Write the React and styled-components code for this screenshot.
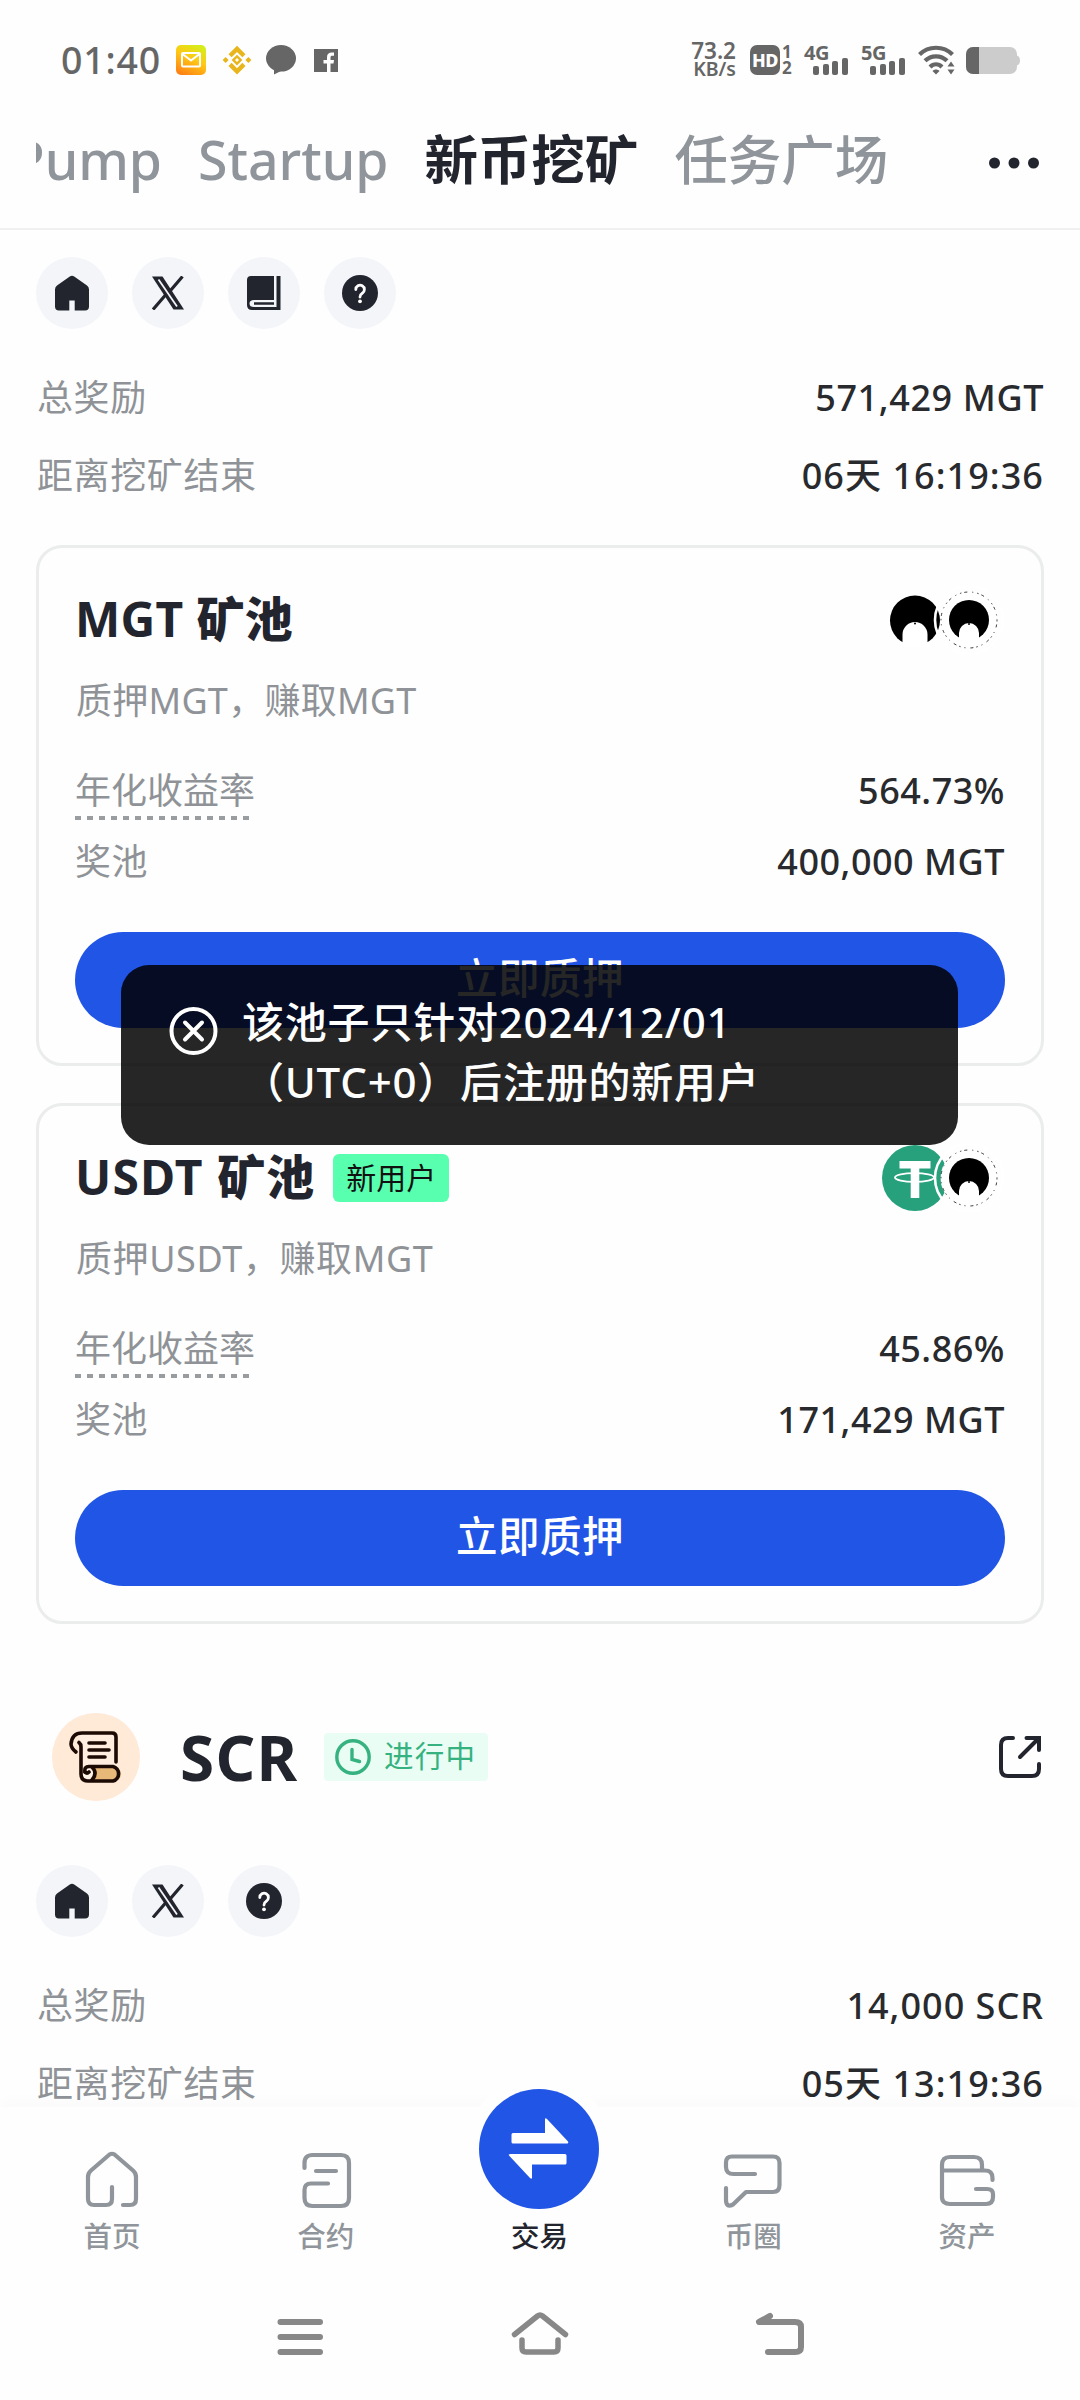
import React from 'react';
import styled, { createGlobalStyle } from 'styled-components';

const fontStack = `'Noto Sans', 'Noto Sans CJK SC', sans-serif`;

const GlobalStyle = createGlobalStyle`
  * { box-sizing: border-box; }
  body { margin: 0; background: #fefefe; }
`;

const Screen = styled.div`
  position: relative;
  display: flex;
  flex-direction: column;
  width: 1080px;
  height: 2400px;
  overflow: hidden;
  background: #fefefe;
  color: #23252e;
  font-family: ${fontStack};
  svg { display: block; flex: none; }
`;

/* ---------- status bar ---------- */
const StatusBar = styled.div`
  display: flex;
  align-items: center;
  justify-content: space-between;
  height: 120px;
  padding: 0 60px 0 61px;
  color: #666;
`;
const StatusGroup = styled.div`
  display: flex;
  align-items: center;
`;
const Clock = styled.span`
  width: 115px;
  margin-top: -1px;
  font-size: 37.5px;
  line-height: 40px;
  font-weight: 500;
  letter-spacing: 0.8px;
`;
const Speed = styled.div`
  display: flex;
  flex-direction: column;
  align-items: flex-end;
  width: 60px;
  margin-right: 14px;
  font-size: 22.5px;
  line-height: 18px;
  font-weight: 600;
  white-space: nowrap;
  span + span { font-size: 19.5px; }
`;
const HdBadge = styled.div`
  display: flex;
  align-items: center;
  justify-content: center;
  width: 30px;
  height: 30px;
  border-radius: 7px;
  background: #666;
  color: #fff;
  font-size: 18px;
  font-weight: 800;
  letter-spacing: -0.5px;
`;
const SimNumbers = styled.div`
  display: flex;
  flex-direction: column;
  width: 12px;
  margin: 0 10px 0 2px;
  font-size: 17px;
  line-height: 16px;
  font-weight: 700;
`;
const Signal = styled.div`
  display: flex;
  flex-direction: column;
  width: 45px;
  height: 30px;
  margin-right: 12px;
  font-size: 20px;
  line-height: 15px;
  font-weight: 700;
  letter-spacing: -0.5px;
`;
const Bars = styled.div`
  display: flex;
  align-items: flex-end;
  gap: 3.6px;
  height: 17px;
  margin: -2px 0 0 9px;
`;
const Bar = styled.i`
  width: 6px;
  height: ${(p) => p.$h}px;
  border-radius: 2px;
  background: #666;
`;

/* ---------- tabs ---------- */
const TabBar = styled.header`
  display: flex;
  align-items: center;
  justify-content: space-between;
  height: 110px;
  padding: 0 39px 22px 36px;
  border-bottom: 2px solid #f0f0f0;
`;
const Tabs = styled.nav`
  display: flex;
  gap: 36px;
  width: 860px;
  margin-top: -6px;
  overflow: hidden;
`;
const Tab = styled.span`
  flex: none;
  font-size: 53.5px;
  line-height: 80px;
  font-weight: ${(p) => (p.$active ? 700 : 500)};
  color: ${(p) => (p.$active ? '#23252e' : '#8f959a')};
  &:first-child { margin-left: -24px; }
`;

/* ---------- project content ---------- */
const Main = styled.main`
  display: flex;
  flex-direction: column;
  height: 1877px;
  padding: 27px 36px 0;
  overflow: hidden;
  > * { flex-shrink: 0; }
`;
const LinkRow = styled.div`
  display: flex;
  gap: 24px;
  margin-bottom: 29px;
`;
const LinkButton = styled.button`
  display: flex;
  align-items: center;
  justify-content: center;
  width: 72px;
  height: 72px;
  padding: 0;
  border: 0;
  border-radius: 50%;
  background: #f3f5f9;
`;
const StatRow = styled.div`
  display: flex;
  align-items: center;
  justify-content: space-between;
  height: 78px;
  padding: 1px 0 0 1px;
`;
const Label = styled.span`
  font-size: 36px;
  line-height: 50px;
  letter-spacing: ${(p) => p.$spacing ?? 0.6}px;
  color: #8f9397;
`;
const Value = styled.span`
  font-size: 36px;
  line-height: 50px;
  font-weight: 500;
  letter-spacing: ${(p) => p.$spacing ?? 0.5}px;
  color: #282a2d;
`;
const Cards = styled.div`
  display: flex;
  flex-direction: column;
  gap: 37px;
  margin: 31px 0 88px;
`;
const Card = styled.section`
  display: flex;
  flex-direction: column;
  height: 521px;
  padding: 38px 36px 35px;
  border: 3px solid #ebecec;
  border-radius: 26px;
`;
const CardHead = styled.div`
  display: flex;
  align-items: center;
  justify-content: space-between;
  height: 66px;
  svg { margin-top: 1px; }
`;
const TitleGroup = styled.div`
  display: flex;
  align-items: center;
`;
const CardTitle = styled.h2`
  margin: 0;
  font-size: 48px;
  line-height: 66px;
  font-weight: 700;
  letter-spacing: ${(p) => p.$spacing || 0}px;
`;
const Heavy = styled.span`
  font-weight: 900;
`;
const NewUserTag = styled.span`
  height: 48px;
  width: 116px;
  margin: 2px 0 0 18px;
  border-radius: 6px;
  background: #57ffaf;
  color: #111;
  font-size: 30px;
  line-height: 48px;
  text-align: center;
`;
const Subtitle = styled(Label)`
  margin: 24px 0 40px 1px;
`;
const PoolRow = styled.div`
  display: flex;
  justify-content: space-between;
  height: 50px;
  margin-bottom: ${(p) => p.$gap}px;
`;
const HintLabel = styled(Label)`
  display: flex;
  flex-direction: column;
  letter-spacing: 0;
  &::after {
    content: '';
    height: 4px;
    width: 174px;
    flex: none;
    background: repeating-linear-gradient(90deg, #9a9da0 0 6px, transparent 6px 12px);
  }
`;
const StakeButton = styled.button`
  height: 96px;
  padding: 0 0 4px;
  border: 0;
  border-radius: 48px;
  background: #2155e6;
  color: #fff;
  font: 500 41.5px/92px ${fontStack};
  letter-spacing: 0.5px;
`;

const ProjectHead = styled.div`
  display: flex;
  align-items: center;
  height: 90px;
  margin-bottom: 63px;
  padding: 0 3px 0 16px;
`;
const ProjectName = styled.h1`
  width: 144px;
  margin: 0 0 0 40px;
  font-size: 62px;
  line-height: 84px;
  font-weight: 700;
  letter-spacing: 1.3px;
`;
const Ongoing = styled.div`
  display: flex;
  align-items: center;
  gap: 13px;
  height: 48px;
  width: 164px;
  margin-right: auto;
  padding-left: 11px;
  border-radius: 4px;
  background: #eafdf4;
  color: #35b280;
  font-size: 29.5px;
  line-height: 44px;
  letter-spacing: 1.2px;
`;
const OngoingText = styled.span`
  margin-top: -2px;
`;

/* ---------- bottom navigation ---------- */
const BottomNav = styled.nav`
  position: relative;
  display: grid;
  grid-template-columns: repeat(5, 1fr);
  height: 163px;
  padding: 0 6px 0 5px;
  background: #fefefe;
  box-shadow: 0 -6px 14px rgba(0, 0, 0, 0.018);
`;
const NavItem = styled.div`
  display: flex;
  flex-direction: column;
  align-items: center;
  padding-top: 39px;
  font-size: 28.5px;
  line-height: 40px;
  font-weight: 500;
  color: ${(p) => (p.$active ? '#23252e' : '#8f959a')};
  svg, i { margin-bottom: 6px; }
`;
const IconSpace = styled.i`
  height: 64px;
`;
const TradeHalo = styled.div`
  position: absolute;
  left: 466px;
  top: -31px;
  width: 146px;
  height: 146px;
  padding: 13px;
  border-radius: 50%;
  background: #fefefe;
`;
const TradeDisc = styled.div`
  display: flex;
  align-items: center;
  justify-content: center;
  width: 120px;
  height: 120px;
  border-radius: 50%;
  background: #2155e6;
`;
const SystemNav = styled.div`
  display: flex;
  align-items: center;
  justify-content: center;
  gap: 180px;
  height: 130px;
`;

/* ---------- toast ---------- */
const Toast = styled.div`
  position: absolute;
  left: 121px;
  top: 965px;
  display: flex;
  width: 837px;
  height: 180px;
  padding: 27px 48px;
  gap: 23px;
  border-radius: 28px;
  background: rgba(0, 0, 0, 0.85);
  color: #fff;
  svg { margin-top: 14px; }
`;
const ToastText = styled.p`
  margin: 0;
  font-size: 42px;
  line-height: 60px;
  font-weight: 500;
  letter-spacing: 0.8px;
`;

/* ---------- icons ---------- */
const MailIcon = () => (
  <svg width="30" height="30" viewBox="0 0 30 30">
    <defs>
      <linearGradient id="mail" x1="0.75" y1="0" x2="0.25" y2="1">
        <stop offset="0" stopColor="#d4ee1a" />
        <stop offset="0.45" stopColor="#ffc814" />
        <stop offset="1" stopColor="#ff8214" />
      </linearGradient>
    </defs>
    <rect width="30" height="30" rx="5" fill="url(#mail)" />
    <rect x="6" y="8" width="18" height="13.5" rx="1" fill="none" stroke="#fff" strokeWidth="2" />
    <path d="M6.500 9l8.500 6.500 8.500-6.500" fill="none" stroke="#fff" strokeWidth="2" />
  </svg>
);
const BinanceIcon = () => (
  <svg width="30" height="30" viewBox="0 0 24 24" fill="#e9b51c">
    <path d="M12 0.500l6.800 6.800-2.500 2.500L12 5.500 7.700 9.800 5.200 7.300zM2.900 9.600L5.300 12l-2.400 2.400L0.500 12zM21.100 9.600l2.400 2.400-2.400 2.400-2.400-2.400zM7.700 14.200l4.300 4.300 4.300-4.300 2.500 2.500-6.800 6.800-6.800-6.800zM12 7.700l4.300 4.300-4.300 4.300L7.700 12zm0 2.700L10.400 12l1.600 1.600 1.600-1.600z" />
  </svg>
);
const ChatBlobIcon = () => (
  <svg width="30" height="30" viewBox="0 0 30 30" fill="#666">
    <ellipse cx="15" cy="13.300" rx="15" ry="13.300" />
    <path d="M8 23v6.500l8-4z" />
  </svg>
);
const FacebookIcon = () => (
  <svg width="24" height="23" viewBox="0 0 24 23">
    <rect width="24" height="23" fill="#666" />
    <path d="M13 23v-8.500H9.500V11H13V8.200C13 5 14.800 3.500 17.800 3.500H20v3.300h-1.700c-1.300 0-1.800.6-1.800 1.800V11H20l-.5 3.500h-3V23z" fill="#fff" />
  </svg>
);
const WifiIcon = () => (
  <svg width="38" height="30" viewBox="0 0 38 30" fill="none" stroke="#666" strokeWidth="4.200">
    <path d="M1.500 9.500C10.500 0.500 25.500 0.500 34.500 9.500" />
    <path d="M7 15.800c6-6 16-6 22 0" />
    <path d="M12 22c3.500-3.500 8.500-3.500 12 0" />
    <path d="M14.500 26c2-2 5-2 7 0L18 29.500z" fill="#666" stroke="none" />
    <path d="M29.500 21.500L33 16.500l3.500 5zM29.500 24.500L33 29.500l3.500-5z" fill="#666" stroke="none" />
  </svg>
);
const BatteryIcon = () => (
  <svg width="54" height="27" viewBox="0 0 54 27">
    <path d="M7 0h37a7 7 0 0 1 7 7v1.500q3 1 3 5t-3 5V20a7 7 0 0 1-7 7H7a7 7 0 0 1-7-7V7a7 7 0 0 1 7-7z" fill="#ccc" />
    <path d="M13 0H7a7 7 0 0 0-7 7v13a7 7 0 0 0 7 7h6z" fill="#666" />
  </svg>
);
const MoreIcon = () => (
  <svg width="54" height="12" viewBox="0 0 54 12" fill="#23252e">
    <circle cx="7.500" cy="6" r="5.500" />
    <circle cx="27" cy="6" r="5.500" />
    <circle cx="46.500" cy="6" r="5.500" />
  </svg>
);
const HomeSolid = () => (
  <svg width="36" height="36" viewBox="0 0 36 36">
    <path d="M15.800 1.600q2.200-1.800 4.400 0L33 10.500q2 1.600 2 4V31.500q0 4-4 4H20.700V25.500h-5.400v10H5q-4 0-4-4V14.500q0-2.400 2-4z" fill="#23252e" />
  </svg>
);
const XIcon = () => (
  <svg width="34" height="34" viewBox="0 0 34 34">
    <path d="M1 0.500H11.500L33 33.500H22.500z" fill="#23252e" />
    <path d="M7.500 3.500L26 30.500" stroke="#f3f5f9" strokeWidth="1.800" fill="none" />
    <path d="M31.500 0.500L19.500 14.500M14.500 19L2 33.500" stroke="#23252e" strokeWidth="3.200" fill="none" />
  </svg>
);
const BookIcon = () => (
  <svg width="36" height="36" viewBox="0 0 36 36">
    <path d="M5 1h23v24H8q-4.500 0-4.500 3.500T8 32h22.500V1H34.500v34H6q-5 0-5-5V5q0-4 4-4z" fill="#23252e" />
    <path d="M8 28.500h20" stroke="#23252e" strokeWidth="2.500" />
  </svg>
);
const QuestionIcon = () => (
  <svg width="36" height="36" viewBox="0 0 36 36">
    <circle cx="18" cy="18" r="18" fill="#23252e" />
    <path d="M13.800 14.500a4.300 4.300 0 1 1 6.500 3.700c-1.700 1-2.300 1.800-2.300 3.800" fill="none" stroke="#fff" strokeWidth="2.800" strokeLinecap="round" />
    <circle cx="18" cy="26.300" r="1.900" fill="#fff" />
  </svg>
);
const linkIcons = { home: HomeSolid, x: XIcon, book: BookIcon, help: QuestionIcon };

const CoinPair = ({ tether }) => (
  <svg width="125" height="68" viewBox="0 0 125 68">
    {tether ? (
      <g>
        <circle cx="35" cy="34" r="33" fill="#26a17b" />
        <path d="M19.500 17h31v7.500H39.300v29.500h-8.600V24.500H19.500z" fill="#fff" />
        <ellipse cx="34.500" cy="33.500" rx="19.500" ry="4.300" fill="none" stroke="#fff" strokeWidth="1.800" />
      </g>
    ) : (
      <g>
        <circle cx="35" cy="34.500" r="25" fill="#000" />
        <path d="M22.500 48.500a12.500 12.500 0 0 1 25 0v12h-25z" fill="#fff" />
        <circle cx="35" cy="37.500" r="1" fill="#000" />
      </g>
    )}
    <circle cx="89" cy="34" r="34" fill="none" stroke="#fff" strokeWidth="2.600" />
    <circle cx="89" cy="34" r="28.500" fill="#fff" />
    <circle cx="89" cy="34" r="28" fill="none" stroke="#222" strokeWidth="0.900" strokeDasharray="1.500 3 3 5 1 4" />
    <circle cx="89" cy="34" r="20" fill="#000" />
    <path d="M79 47a10 10 0 0 1 20 0v9H79z" fill="#fff" />
    <circle cx="89" cy="38" r="1" fill="#000" />
  </svg>
);
const ScrollLogo = () => (
  <svg width="88" height="88" viewBox="0 0 88 88" fill="none" stroke="#1c0a04" strokeWidth="3.600" strokeLinecap="round" strokeLinejoin="round">
    <circle cx="44" cy="44" r="44" fill="#ffe9d7" stroke="none" />
    <path d="M28 20h32q4 0 4 4v30H40L28 66z" fill="#ffeedf" stroke="none" />
    <path d="M40 54h22a7 7 0 0 1 0 14H34z" fill="#e8b878" stroke="none" />
    <circle cx="35" cy="61" r="7" fill="#fff2e6" stroke="none" />
    <path d="M24 39Q19 35 19 31Q20 20 30 20H60Q64 20 64 24V49" />
    <path d="M27 29.500Q29 31 29 34V61Q29 68 36 68H61A7.500 7.500 0 0 0 61 53.500H37Q32 53.500 33 59" />
    <path d="M40 54Q46 60 40 67M33 59q2 2 4 0" />
    <path d="M37 30h16M37 37h20M37 44h16" />
  </svg>
);
const ClockIcon = () => (
  <svg width="36" height="36" viewBox="0 0 36 36" fill="none" stroke="#35b280" strokeWidth="3.400" strokeLinecap="round">
    <circle cx="18" cy="18" r="16.200" />
    <path d="M17 10.500v10l7.500 2" />
  </svg>
);
const ShareIcon = () => (
  <svg width="42" height="42" viewBox="0 0 42 42" fill="none" stroke="#23252e" strokeWidth="4" strokeLinecap="round">
    <path d="M14 2H9Q2 2 2 9v24q0 7 7 7h24q7 0 7-7v-5" />
    <path d="M27.500 2H40v12M39 3L21 21" />
  </svg>
);
const navSvg = { width: 64, height: 64, viewBox: '0 0 64 64', fill: 'none', stroke: '#8f959a', strokeWidth: 4.2, strokeLinecap: 'round', strokeLinejoin: 'round' };
const NavHome = () => (
  <svg {...navSvg}>
    <path d="M32 41v12q0 6-6 6H14q-6 0-6-6V31q0-4 3-6.500L29.500 8.500Q32 7 34.500 8.500L53 24.500Q56 27 56 31V53q0 6-6 6H43" />
  </svg>
);
const NavDoc = () => (
  <svg {...navSvg}>
    <path d="M10.500 22V17q0-8 8-8H47q8 0 8 8v35q0 8-8 8H18.500q-8 0-8-8V44q0-6.500 6.500-6.500H34" />
    <path d="M22 25H42" />
  </svg>
);
const NavChat = () => (
  <svg {...navSvg}>
    <path d="M34 28H12.500Q5 28 5 21V16.500Q5 10.500 11 10.500H52Q58.500 10.500 58.500 17V39Q58.500 46 52 46H25L12 58.500Q5 62 5 54V42" />
  </svg>
);
const NavWallet = () => (
  <svg {...navSvg}>
    <path d="M41 43H52Q58 43 58 48V51Q58 58 51 58H15Q7 58 7 51V19Q7 11 15 11H39Q47 11 47 19V24M7 24.500H50Q57.500 24.500 57.500 32V34" />
  </svg>
);
const TradeIcon = () => (
  <svg width="64" height="64" viewBox="0 0 64 64" fill="#fff">
    <path d="M6 16H38V2.500q0-2 2-.5L61 24.500q1 2-1.500 2H6q-1.500 0-1.500-1.500V17.500Q4.500 16 6 16z" />
    <path d="M58 47.500H25V60.500q0 2-2 .5L2 38.500Q1 37 3.500 37H58q1.500 0 1.500 1.500V46q0 1.500-1.500 1.500z" />
  </svg>
);
const sysSvg = { width: 60, height: 50, viewBox: '0 0 60 50', fill: 'none', stroke: '#888', strokeWidth: 6, strokeLinecap: 'round', strokeLinejoin: 'round' };
const MenuIcon = () => (
  <svg {...sysSvg}><path d="M10.500 12H50M10.500 27H50M10.500 42H50" /></svg>
);
const SysHome = () => (
  <svg {...sysSvg} strokeWidth="5.500"><path d="M4.500 24.500L27.500 6Q30 4 32.500 6L55.500 24.500M12 30v8q0 4 4 4H44q4 0 4-4V30" /></svg>
);
const BackIcon = () => (
  <svg {...sysSvg}><path d="M20 6L9 12H45Q51 12 51 17V37Q51 42 45 42H18" /></svg>
);
const ErrorIcon = () => (
  <svg width="50" height="50" viewBox="0 0 50 50" fill="none" stroke="#fff" strokeWidth="4" strokeLinecap="round">
    <circle cx="24.500" cy="25" r="22" />
    <path d="M16 16.500l17 17M33 16.500l-17 17" />
  </svg>
);

/* ---------- composed parts ---------- */
const Links = ({ items }) => (
  <LinkRow>
    {items.map((k) => {
      const Icon = linkIcons[k];
      return <LinkButton key={k}><Icon /></LinkButton>;
    })}
  </LinkRow>
);
const Stat = ({ label, value, spacing }) => (
  <StatRow><Label>{label}</Label><Value $spacing={spacing}>{value}</Value></StatRow>
);
const PoolCard = ({ token, spacing, noteSpacing, isNew, tether, note, apr, pool }) => (
  <Card>
    <CardHead>
      <TitleGroup>
        <CardTitle $spacing={spacing}>{token} <Heavy>矿池</Heavy></CardTitle>
        {isNew && <NewUserTag>新用户</NewUserTag>}
      </TitleGroup>
      <CoinPair tether={tether} />
    </CardHead>
    <Subtitle $spacing={noteSpacing}>{note}</Subtitle>
    <PoolRow $gap={21}><HintLabel>年化收益率</HintLabel><Value>{apr}</Value></PoolRow>
    <PoolRow $gap={45}><Label>奖池</Label><Value>{pool}</Value></PoolRow>
    <StakeButton>立即质押</StakeButton>
  </Card>
);
const SignalMeter = ({ name }) => (
  <Signal>
    {name}
    <Bars>{[9, 11, 14, 17].map((h) => <Bar key={h} $h={h} />)}</Bars>
  </Signal>
);

const IconSlot = styled.span`
  display: flex;
  justify-content: flex-start;
  width: ${(p) => p.$w}px;
`;

export default function App() {
  return (
    <Screen>
      <GlobalStyle />
      <StatusBar>
        <StatusGroup>
          <Clock>01:40</Clock>
          <IconSlot $w={46}><MailIcon /></IconSlot>
          <IconSlot $w={44}><BinanceIcon /></IconSlot>
          <IconSlot $w={48}><ChatBlobIcon /></IconSlot>
          <FacebookIcon />
        </StatusGroup>
        <StatusGroup>
          <Speed><span>73.2</span><span>KB/s</span></Speed>
          <HdBadge>HD</HdBadge>
          <SimNumbers><span>1</span><span>2</span></SimNumbers>
          <SignalMeter name="4G" />
          <SignalMeter name="5G" />
          <IconSlot $w={48}><WifiIcon /></IconSlot>
          <BatteryIcon />
        </StatusGroup>
      </StatusBar>
      <TabBar>
        <Tabs>
          <Tab>Pump</Tab>
          <Tab>Startup</Tab>
          <Tab $active>新币挖矿</Tab>
          <Tab>任务广场</Tab>
        </Tabs>
        <MoreIcon />
      </TabBar>
      <Main>
        <Links items={['home', 'x', 'book', 'help']} />
        <Stat label="总奖励" value="571,429 MGT" spacing={0.6} />
        <Stat label="距离挖矿结束" value="06天 16:19:36" spacing={1.05} />
        <Cards>
          <PoolCard token="MGT" spacing={0.3} noteSpacing={0.25} note="质押MGT，赚取MGT" apr="564.73%" pool="400,000 MGT" />
          <PoolCard token="USDT" spacing={1.1} noteSpacing={0.6} isNew tether note="质押USDT，赚取MGT" apr="45.86%" pool="171,429 MGT" />
        </Cards>
        <ProjectHead>
          <ScrollLogo />
          <ProjectName>SCR</ProjectName>
          <Ongoing><ClockIcon /><OngoingText>进行中</OngoingText></Ongoing>
          <ShareIcon />
        </ProjectHead>
        <Links items={['home', 'x', 'help']} />
        <Stat label="总奖励" value="14,000 SCR" spacing={1} />
        <Stat label="距离挖矿结束" value="05天 13:19:36" spacing={1.05} />
      </Main>
      <BottomNav>
        <TradeHalo><TradeDisc><TradeIcon /></TradeDisc></TradeHalo>
        <NavItem><NavHome />首页</NavItem>
        <NavItem><NavDoc />合约</NavItem>
        <NavItem $active><IconSpace />交易</NavItem>
        <NavItem><NavChat />币圈</NavItem>
        <NavItem><NavWallet />资产</NavItem>
      </BottomNav>
      <SystemNav>
        <MenuIcon />
        <SysHome />
        <BackIcon />
      </SystemNav>
      <Toast>
        <ErrorIcon />
        <ToastText>该池子只针对2024/12/01<br />（UTC+0）后注册的新用户</ToastText>
      </Toast>
    </Screen>
  );
}
